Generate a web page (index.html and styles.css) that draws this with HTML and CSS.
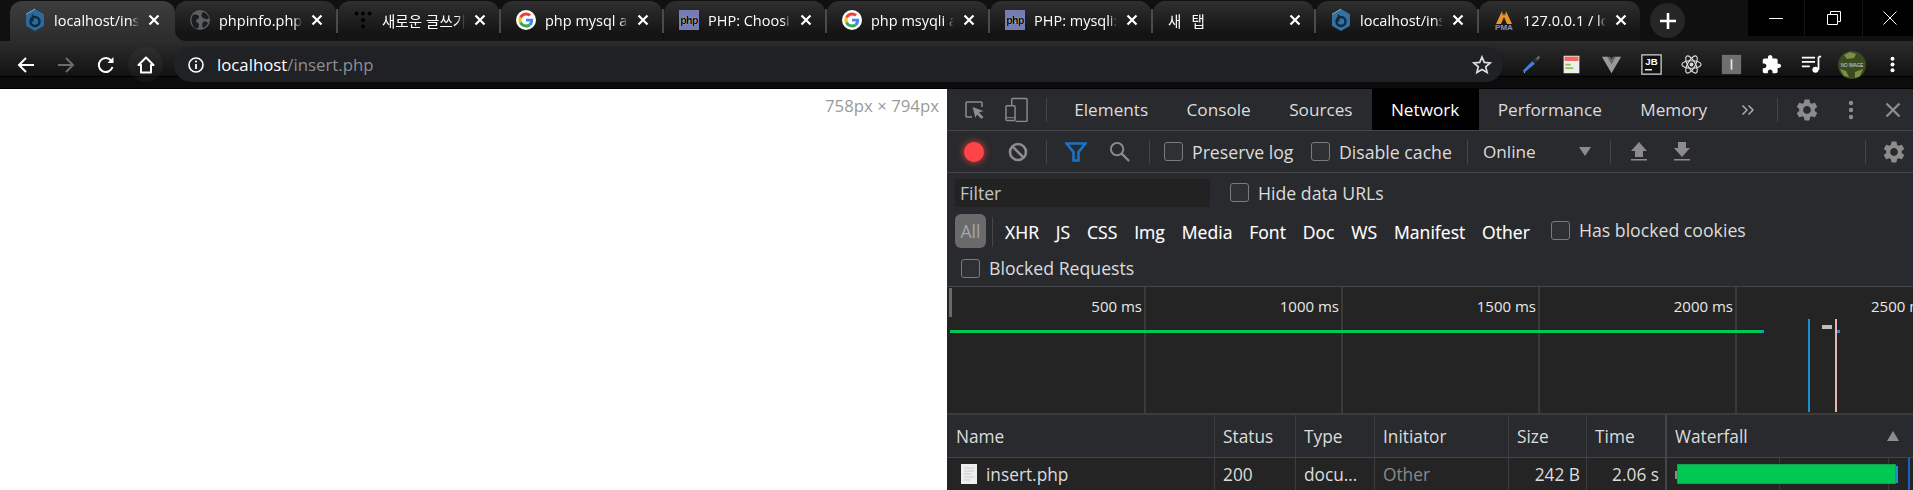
FILE: index.html
```html
<!DOCTYPE html>
<html lang="ko">
<head>
<meta charset="utf-8">
<title>localhost/insert.php</title>
<link rel="stylesheet" href="styles.css">
</head>
<body>
<svg class="defs" aria-hidden="true">
  <symbol id="g" viewBox="-8 -8 64 64">
    <circle cx="24" cy="24" r="32" fill="#fff"/>
    <path fill="#EA4335" d="M24 9.5c3.54 0 6.71 1.22 9.21 3.6l6.85-6.85C35.9 2.38 30.47 0 24 0 14.62 0 6.51 5.38 2.56 13.22l7.98 6.19C12.43 13.72 17.74 9.5 24 9.5z"/>
    <path fill="#4285F4" d="M46.98 24.55c0-1.57-.15-3.09-.38-4.55H24v9.02h12.94c-.58 2.96-2.26 5.48-4.78 7.18l7.73 6c4.51-4.18 7.09-10.36 7.09-17.65z"/>
    <path fill="#FBBC05" d="M10.53 28.59c-.48-1.45-.76-2.99-.76-4.59s.27-3.14.76-4.59l-7.98-6.19C.92 16.46 0 20.12 0 24c0 3.88.92 7.54 2.56 10.78l7.97-6.19z"/>
    <path fill="#34A853" d="M24 48c6.48 0 11.93-2.13 15.89-5.81l-7.73-6c-2.15 1.45-4.92 2.3-8.16 2.3-6.26 0-11.57-4.22-13.47-9.91l-7.98 6.19C6.51 42.62 14.62 48 24 48z"/>
  </symbol>
  <symbol id="x" viewBox="0 0 14 14">
    <path d="M2.5 2.5l9 9M11.5 2.5l-9 9" stroke="#fff" stroke-width="2.2" fill="none"/>
  </symbol>
  <symbol id="bn" viewBox="0 0 20 24">
    <path d="M10 1l9 5.2v11.6L10 23l-9-5.200V6.200z" fill="currentColor"/>
    <circle cx="10" cy="13.500" r="4.500" fill="none" stroke="#0d2a40" stroke-width="2.400"/>
    <path d="M7.500 6.500v7" stroke="#0d2a40" stroke-width="1.800"/>
    <path d="M1 6.200L10 1" stroke="#7fb0d0" stroke-width="1"/>
  </symbol>
  <symbol id="gear" viewBox="0 0 24 24">
    <path fill="currentColor" d="M19.140 12.940c.04-.3.06-.61.06-.94 0-.32-.02-.64-.07-.94l2.030-1.580c.18-.14.23-.41.12-.61l-1.920-3.320c-.12-.22-.37-.29-.59-.22l-2.390.96c-.5-.38-1.030-.7-1.620-.94l-.36-2.540c-.04-.24-.24-.41-.48-.41h-3.840c-.24 0-.43.17-.47.41l-.36 2.540c-.59.24-1.130.57-1.620.94l-2.390-.96c-.22-.08-.47 0-.59.22L2.740 8.870c-.12.21-.08.47.12.61l2.030 1.580c-.05.3-.09.63-.09.94s.02.64.07.94l-2.030 1.580c-.18.14-.23.41-.12.61l1.920 3.320c.12.22.37.29.59.22l2.390-.96c.5.38 1.030.7 1.620.94l.36 2.540c.05.24.24.41.48.41h3.840c.24 0 .44-.17.47-.41l.36-2.540c.59-.24 1.130-.56 1.620-.94l2.390.96c.22.08.47 0 .59-.22l1.920-3.320c.12-.22.07-.47-.12-.61l-2.010-1.580zM12 15.600c-1.980 0-3.600-1.620-3.600-3.600s1.620-3.600 3.600-3.600 3.600 1.620 3.600 3.600-1.620 3.600-3.600 3.600z"/>
  </symbol>
</svg>

<header class="chrome">
  <div class="tabstrip">
    <div class="tab active">
      <svg class="fav fav-bn-dim"><use href="#bn"/></svg>
      <span class="title">localhost/insert.php</span>
      <svg class="close"><use href="#x"/></svg>
    </div>
    <div class="tab">
      <svg class="fav" viewBox="0 0 20 20"><circle cx="10" cy="10" r="10" fill="#5b5e63"/><path d="M3 5c4-1 6 0 6 2s-3 2-3 4 3 1 3 4-2 4-4 3C2 16 0 9 3 5zM13 2c3 1 5 3 6 6-2 2-4 1-6 0s-2-4 0-6zM13 12c2-1 4 0 5 1-1 2-3 4-5 5-1-2-1-4 0-6z" fill="#1b1c1e"/></svg>
      <span class="title">phpinfo.php</span>
      <svg class="close"><use href="#x"/></svg>
    </div>
    <i class="tabsep"></i>
    <div class="tab">
      <svg class="fav" viewBox="0 0 20 20"><g fill="#000"><circle cx="3.500" cy="3.500" r="2"/><circle cx="10" cy="3.500" r="2"/><circle cx="16.500" cy="3.500" r="2"/><circle cx="10" cy="10" r="2"/><circle cx="10" cy="16.500" r="2"/></g></svg>
      <span class="title ko">새로운 글쓰기</span>
      <svg class="close"><use href="#x"/></svg>
    </div>
    <i class="tabsep"></i>
    <div class="tab">
      <svg class="fav"><use href="#g"/></svg>
      <span class="title">php mysql and</span>
      <svg class="close"><use href="#x"/></svg>
    </div>
    <i class="tabsep"></i>
    <div class="tab">
      <span class="fav php">php</span>
      <span class="title">PHP: Choosing</span>
      <svg class="close"><use href="#x"/></svg>
    </div>
    <i class="tabsep"></i>
    <div class="tab">
      <svg class="fav"><use href="#g"/></svg>
      <span class="title">php msyqli an</span>
      <svg class="close"><use href="#x"/></svg>
    </div>
    <i class="tabsep"></i>
    <div class="tab">
      <span class="fav php">php</span>
      <span class="title">PHP: mysqli::</span>
      <svg class="close"><use href="#x"/></svg>
    </div>
    <i class="tabsep"></i>
    <div class="tab">
      <span class="title ko wide">새 탭</span>
      <svg class="close"><use href="#x"/></svg>
    </div>
    <i class="tabsep"></i>
    <div class="tab">
      <svg class="fav fav-bn"><use href="#bn"/></svg>
      <span class="title">localhost/insert.php</span>
      <svg class="close"><use href="#x"/></svg>
    </div>
    <i class="tabsep"></i>
    <div class="tab">
      <svg class="fav" viewBox="0 0 20 20"><path d="M2 14L8 1l1 5 1-3 1 3 1-5 6 13h-5l-3-7-3 7z" fill="#e8952a"/><text x="10" y="20" class="pma">PMA</text></svg>
      <span class="title">127.0.0.1 / localhost</span>
      <svg class="close"><use href="#x"/></svg>
    </div>
    <div class="newtab"><svg viewBox="0 0 18 18"><path d="M9 1v16M1 9h16" stroke="#fff" stroke-width="2.600"/></svg></div>
    <div class="winctl">
      <div class="winbtn"><svg viewBox="0 0 14 14"><path d="M0 7.500h14" stroke="#fff"/></svg></div>
      <div class="winbtn"><svg viewBox="0 0 14 14"><path d="M.5 3.500h10v10H.5zM3.500 3.500V.5h10v10h-3" stroke="#fff" fill="none"/></svg></div>
      <div class="winbtn"><svg viewBox="0 0 14 14"><path d="M.5.5l13 13M13.500.5l-13 13" stroke="#fff"/></svg></div>
    </div>
  </div>
  <div class="toolbar">
    <button class="nav"><svg viewBox="0 0 18 18"><path d="M17 9H2M9 2L2 9l7 7" stroke="#fff" stroke-width="2" fill="none"/></svg></button>
    <button class="nav"><svg viewBox="0 0 18 18"><path d="M1 9h15M9 2l7 7-7 7" stroke="#6c6c6c" stroke-width="2" fill="none"/></svg></button>
    <button class="nav"><svg viewBox="0 0 18 18"><path d="M15.500 11a7 7 0 1 1-1-6" stroke="#fff" stroke-width="2" fill="none"/><path d="M16.500 1v6h-6z" fill="#fff"/></svg></button>
    <button class="nav home"><svg viewBox="0 0 18 18"><path d="M9 1.500L1.500 9H4v7.500h10V9h2.500z" stroke="#fff" stroke-width="2" fill="none" stroke-linejoin="round"/></svg></button>
    <div class="omnibox">
      <svg class="info" viewBox="0 0 16 16"><circle cx="8" cy="8" r="7" stroke="#fff" stroke-width="1.600" fill="none"/><path d="M8 7v5" stroke="#fff" stroke-width="1.800"/><circle cx="8" cy="4.500" r="1.100" fill="#fff"/></svg>
      <span class="url"><span class="host">localhost</span>/insert.php</span>
      <svg class="star" viewBox="0 0 20 20"><path d="M10 2l2.300 5.400 5.900.5-4.500 3.900 1.400 5.700L10 14.600l-5.100 2.900 1.400-5.700L1.800 7.900l5.900-.5z" stroke="#ddd" stroke-width="1.700" fill="none"/></svg>
    </div>
    <div class="ext-row">
      <svg class="ext" viewBox="0 0 24 24"><path d="M4 21l-2-2L13 8l3 3z" fill="#3f7de0"/><path d="M14 7l3-3 3 3-3 3z" fill="#333"/><path d="M17 5l3-3 2 2-3 3z" fill="#666"/><path d="M3 22l1-2 1 1z" fill="#9bc"/></svg>
      <svg class="ext" viewBox="0 0 24 24"><rect x="3" y="2" width="18" height="20" fill="#eee"/><rect x="4" y="3" width="16" height="5" fill="#f06a62"/><path d="M5 11h6v2H5zM5 15h9v2H5z" fill="#8bc34a"/></svg>
      <svg class="ext" viewBox="0 0 24 24"><path d="M1 3h7l4 7 4-7h7L12 22z" fill="#9a9a9a"/><path d="M7 3h3.500L12 6l1.500-3H17l-5 9z" fill="#686868"/></svg>
      <svg class="ext" viewBox="0 0 24 24"><rect x="1" y="1" width="22" height="22" fill="#111" stroke="#ccc" stroke-width="1.500"/><text x="12" y="13" class="jb">JB</text><path d="M4.500 18h8" stroke="#fff" stroke-width="1.600"/></svg>
      <svg class="ext" viewBox="0 0 24 24"><g fill="none" stroke="#ddd" stroke-width="1.300"><ellipse cx="12" cy="12" rx="11" ry="4.300"/><ellipse cx="12" cy="12" rx="11" ry="4.300" transform="rotate(60 12 12)"/><ellipse cx="12" cy="12" rx="11" ry="4.300" transform="rotate(120 12 12)"/></g><circle cx="12" cy="12" r="2.200" fill="#ddd"/></svg>
      <svg class="ext" viewBox="0 0 24 24"><rect x="1" y="1" width="22" height="22" fill="#6f6f6f"/><rect x="11" y="6" width="2" height="12" fill="#dfe4ee"/></svg>
      <svg class="ext" viewBox="0 0 24 24"><path fill="#fff" d="M20.500 11H19V7c0-1.100-.9-2-2-2h-4V3.500C13 2.120 11.880 1 10.500 1S8 2.120 8 3.500V5H4c-1.100 0-1.990.9-1.990 2v3.800H3.500c1.490 0 2.700 1.210 2.700 2.700s-1.210 2.700-2.700 2.700H2V20c0 1.100.9 2 2 2h3.800v-1.500c0-1.490 1.210-2.700 2.700-2.700 1.490 0 2.700 1.210 2.700 2.700V22H17c1.100 0 2-.9 2-2v-4h1.500c1.380 0 2.500-1.120 2.500-2.500S21.880 11 20.500 11z"/></svg>
      <svg class="ext" viewBox="0 0 24 24"><path d="M1 4h15M1 9h15M1 14h9" stroke="#fff" stroke-width="2"/><path d="M20 3h3M20 3v15" stroke="#fff" stroke-width="2"/><circle cx="16.500" cy="18" r="3.500" fill="#fff"/></svg>
      <svg class="avatar" viewBox="0 0 28 28"><circle cx="14" cy="14" r="14" fill="#3c4a20"/><path d="M6 4l6-3 6 2-2 4-7 1zM2 18l6 2 3 6-5-1zM17 21l8-3-3 7-5 2z" fill="#7c8f45"/><text x="14" y="16" class="noimg">NO IMAGE</text></svg>
      <svg class="dots" viewBox="0 0 6 20"><g fill="#fff"><circle cx="3" cy="3" r="2.400"/><circle cx="3" cy="10" r="2.400"/><circle cx="3" cy="17" r="2.400"/></g></svg>
    </div>
  </div>
</header>

<main class="main">
  <section class="page"><span class="dim">758px × 794px</span></section>
  <section class="devtools">
    <div class="dt-row tabs-row">
      <svg class="ic ic-inspect" viewBox="0 0 20 20"><path d="M7 17H2a1 1 0 0 1-1-1V3a1 1 0 0 1 1-1h14a1 1 0 0 1 1 1v4" stroke="#8c8c8c" stroke-width="1.500" fill="none"/><path d="M7.500 7l11 4-4.500 1.500 4.500 4.500-2 2-4.500-4.500L10.500 18z" fill="#8c8c8c"/></svg>
      <svg class="ic ic-device" viewBox="0 0 24 25"><path d="M7 8V2a1 1 0 0 1 1-1h14a1 1 0 0 1 1 1v22a1 1 0 0 1-1 1H11" stroke="#8c8c8c" stroke-width="1.500" fill="none"/><rect x="1" y="8.500" width="9.500" height="15.500" rx="1" stroke="#8c8c8c" stroke-width="1.500" fill="none"/><path d="M1 21h9.500" stroke="#8c8c8c"/></svg>
      <i class="vsep vsep-tabs"></i>
      <span class="dt-tab first">Elements</span>
      <span class="dt-tab">Console</span>
      <span class="dt-tab">Sources</span>
      <span class="dt-tab current">Network</span>
      <span class="dt-tab">Performance</span>
      <span class="dt-tab">Memory</span>
      <svg class="ic ic-more" viewBox="0 0 14 12"><path d="M1.500 1.500L6 6l-4.500 4.500M7.500 1.500L12 6l-4.500 4.500" stroke="#aaa" stroke-width="1.500" fill="none"/></svg>
      <i class="vsep vsep-more"></i>
      <svg class="ic ic-gear ic-gear-top"><use href="#gear"/></svg>
      <svg class="ic ic-kebab" viewBox="0 0 6 20"><g fill="#8c8c8c"><circle cx="3" cy="3" r="2.200"/><circle cx="3" cy="10" r="2.200"/><circle cx="3" cy="17" r="2.200"/></g></svg>
      <svg class="ic ic-close" viewBox="0 0 16 16"><path d="M1.500 1.500l13 13M14.500 1.500l-13 13" stroke="#8c8c8c" stroke-width="2.400"/></svg>
    </div>
    <div class="dt-row tools-row">
      <span class="record"></span>
      <svg class="ic ic-block" viewBox="0 0 20 20"><circle cx="10" cy="10" r="8" stroke="#8c8c8c" stroke-width="2.600" fill="none"/><path d="M4.500 4.500l11 11" stroke="#8c8c8c" stroke-width="2.600"/></svg>
      <i class="vsep vsep-a"></i>
      <svg class="ic ic-filter" viewBox="0 0 22 20"><path d="M1.500 1.500h19L13.500 10v8.500h-5V10z" fill="none" stroke="#1a73c4" stroke-width="2.600"/></svg>
      <svg class="ic ic-search" viewBox="0 0 22 22"><circle cx="8.500" cy="8.500" r="6.500" stroke="#8c8c8c" stroke-width="2" fill="none"/><path d="M13 13l8 8" stroke="#8c8c8c" stroke-width="2.400"/></svg>
      <i class="vsep vsep-b"></i>
      <label class="check preserve"><i class="box"></i>Preserve log</label>
      <label class="check disable"><i class="box"></i>Disable cache</label>
      <i class="vsep vsep-c"></i>
      <span class="online">Online</span>
      <i class="tri"></i>
      <i class="vsep vsep-d"></i>
      <svg class="ic ic-up" viewBox="0 0 16 19"><path d="M8 0l8 9h-4v6H4V9H0zM0 17h16v1.500H0z" fill="#8c8c8c"/></svg>
      <svg class="ic ic-down" viewBox="0 0 16 19"><path d="M4 0h8v6h4l-8 9-8-9h4zM0 17h16v1.500H0z" fill="#8c8c8c"/></svg>
      <i class="vsep vsep-e"></i>
      <svg class="ic ic-gear ic-gear-tool"><use href="#gear"/></svg>
    </div>
    <div class="dt-plain filter-row">
      <span class="filter-input">Filter</span>
      <label class="check hide"><i class="box"></i>Hide data URLs</label>
    </div>
    <div class="dt-plain types-row">
      <span class="chip">All</span>
      <i class="vsep vsep-chip"></i>
      <span class="type">XHR</span>
      <span class="type">JS</span>
      <span class="type">CSS</span>
      <span class="type">Img</span>
      <span class="type">Media</span>
      <span class="type">Font</span>
      <span class="type">Doc</span>
      <span class="type">WS</span>
      <span class="type">Manifest</span>
      <span class="type">Other</span>
      <label class="check cookies"><i class="box"></i>Has blocked cookies</label>
    </div>
    <div class="dt-plain blocked-row">
      <label class="check"><i class="box"></i>Blocked Requests</label>
    </div>
    <div class="overview">
      <span class="tick">500 ms</span>
      <span class="tick">1000 ms</span>
      <span class="tick">1500 ms</span>
      <span class="tick">2000 ms</span>
      <span class="tick last">2500 ms</span>
      <i class="handle"></i>
      <i class="ov ov-green"></i>
      <i class="ov ov-vblue"></i>
      <i class="ov ov-vpink"></i>
      <i class="ov ov-dash"></i>
      <i class="ov ov-tail"></i>
    </div>
    <div class="net-row net-head">
      <span class="cell c-name">Name</span>
      <span class="cell c-status">Status</span>
      <span class="cell c-type">Type</span>
      <span class="cell c-init">Initiator</span>
      <span class="cell c-size">Size</span>
      <span class="cell c-time">Time</span>
      <span class="cell c-wf">Waterfall<i class="sort"></i></span>
    </div>
    <div class="net-row net-body">
      <span class="cell c-name"><svg class="doc" viewBox="0 0 16 20"><path d="M0 0h16v20H0z" fill="#eee"/><path d="M3 4h10M3 7h10M3 10h7M3 13h10M3 16h6" stroke="#ccc"/></svg>insert.php</span>
      <span class="cell c-status">200</span>
      <span class="cell c-type">docu…</span>
      <span class="cell c-init muted">Other</span>
      <span class="cell c-size">242 B</span>
      <span class="cell c-time">2.06 s</span>
      <span class="cell c-wf wf">
        <i class="wf-line wf-l1"></i><i class="wf-line wf-l2"></i>
        <i class="wf-wait"></i><i class="wf-bar"></i><i class="wf-end"></i><i class="wf-mark"></i>
      </span>
    </div>
  </section>
</main>
</body>
</html>
```

FILE: styles.css
```css
* { box-sizing: border-box; }
html, body { margin: 0; height: 490px; overflow: hidden; background: #000; }
body { font-family: "Open Sans", "Noto Sans CJK KR", sans-serif; color: #fff; display: flex; flex-direction: column; }
.defs { position: absolute; width: 0; height: 0; }
i { display: block; font-style: normal; }

/* tabs */
.tabstrip { height: 41px; display: flex; background: #101010; padding-left: 10px; align-items: flex-end; }
.tab { width: 161px; height: 40px; flex: none; display: flex; align-items: center; padding: 0 12px 2px 15px; border-radius: 12px 12px 0 0; background: linear-gradient(#2f2f2f, #141414 80%); position: relative; font-size: 14.500px; }
.tab.active { width: 165px; padding-right: 14px; background: linear-gradient(#3d3d3d, #2c2c2c); }
.tab.active::after { content: ""; position: absolute; right: -10px; bottom: 0; width: 10px; height: 10px; background: radial-gradient(circle at 100% 0, transparent 9.500px, #2c2c2c 10px); z-index: 2; }
.tabsep { width: 2px; height: 24px; flex: none; align-self: flex-start; margin-top: 9px; background: #4b4b4b; }
.fav { width: 20px; height: 20px; flex: none; margin-right: 9px; }
.fav-bn-dim { height: 24px; color: #2c6a99; }
.fav-bn { height: 24px; color: #37719f; }
.php { background: #777bb3; color: #000; font: 700 10.500px/20px "Liberation Sans", sans-serif; text-align: center; letter-spacing: -.5px; text-shadow: 0 0 1px #fff; }
.pma { font: 700 8px "Liberation Sans", sans-serif; fill: #8a90c0; text-anchor: middle; }
.title { flex: 1; min-width: 0; white-space: nowrap; overflow: hidden; -webkit-mask-image: linear-gradient(90deg, #000 90%, transparent 100%); mask-image: linear-gradient(90deg, #000 90%, transparent 100%); }
.ko { font-family: "Noto Sans CJK KR", sans-serif; }
.ko.wide { letter-spacing: 3px; }
.close { width: 14px; height: 14px; flex: none; margin-left: 8px; }
.newtab { width: 35px; height: 35px; flex: none; margin: 0 0 3px 10px; border-radius: 50%; background: #262626; display: flex; align-items: center; justify-content: center; }
.newtab svg { width: 18px; height: 18px; }
.winctl { margin-left: auto; align-self: flex-start; display: flex; height: 36px; background: #000; }
.winbtn { width: 56px; height: 36px; display: flex; align-items: center; justify-content: center; border-left: 1px solid #151515; }
.winbtn:nth-child(1) { border-left: 0; }
.winbtn:nth-child(2) { width: 58px; }
.winbtn:nth-child(3) { width: 51px; padding-left: 4px; }
.winbtn svg { width: 14px; height: 14px; }

/* toolbar */
.toolbar { height: 48px; display: flex; align-items: flex-start; padding: 6px 0 0 8px; background: linear-gradient(#2c2c2c, #121212 35px, #000 35px, #000 36px, #0c0c0c 36px, #0c0c0c 47px, #000 47px); }
.nav { width: 35px; height: 35px; margin-right: 5px; padding: 0; border: 0; background: none; display: flex; align-items: center; justify-content: center; flex: none; border-radius: 50%; }
.nav svg { width: 18px; height: 18px; }
.nav.home { background: rgba(255, 255, 255, .035); }
.omnibox { width: 1329px; margin-left: 6px; height: 35px; border-radius: 18px; background: #202124; display: flex; align-items: center; padding: 0 11px 0 14px; flex: none; }
.info { width: 16px; height: 16px; flex: none; }
.url { margin-left: 13px; font-size: 16.800px; color: #8e8f92; }
.host { color: #fff; }
.star { width: 20px; height: 20px; margin-left: auto; }
.ext-row { display: flex; align-items: center; height: 35px; margin-left: 18px; gap: 19px; }
.ext { width: 21px; height: 21px; flex: none; }
.avatar { width: 28px; height: 28px; margin: 0 -3.500px; flex: none; }
.dots { width: 5px; height: 17px; margin-left: 9px; flex: none; }
.jb { font: 700 11px "Liberation Sans", sans-serif; fill: #fff; text-anchor: middle; }
.noimg { font: 4.500px "Liberation Sans", sans-serif; fill: #ddd; text-anchor: middle; }

/* page */
.main { flex: 1; min-height: 0; display: flex; }
.page { width: 947px; flex: none; background: #fff; display: flex; justify-content: flex-end; padding: 5px 8px 0 0; }
.dim { font-size: 16.800px; line-height: 24px; height: 24px; color: #9a9a9a; }

/* devtools */
.devtools { flex: 1; min-width: 0; background: #292a2d; font-size: 17.200px; overflow: hidden; color: #dcdcdc; }
.dt-row { display: flex; align-items: center; border-bottom: 1px solid #45464a; }
.tabs-row { height: 42px; padding: 0 12px 0 18px; }
.tools-row { height: 42px; padding: 0 6px 0 18px; }
.ic { flex: none; display: block; }
.ic-inspect { width: 20px; height: 20px; }
.ic-device { width: 23px; height: 25px; margin-left: 20px; }
.vsep { width: 1px; height: 24px; background: #45464a; flex: none; }
.vsep-tabs { margin-left: 18px; }
.dt-tab { padding: 0 19.200px; height: 41px; line-height: 41px; flex: none; }
.dt-tab.first { margin-left: 8px; }
.dt-tab.current { background: #000; color: #fff; }
.ic-more { width: 14px; height: 12px; margin-left: auto; }
.vsep-more { margin-left: 22px; }
.ic-gear { width: 26px; height: 26px; color: #8c8c8c; }
.ic-gear-top { margin-left: 16px; }
.ic-kebab { width: 6px; height: 20px; margin-left: 28px; }
.ic-close { width: 16px; height: 16px; margin-left: 31px; }
.record { width: 20px; height: 20px; border-radius: 50%; background: #ff4447; box-shadow: 0 0 6px 1px #b83a3a; flex: none; margin-left: -1px; }
.ic-block { width: 20px; height: 20px; margin-left: 24px; }
.vsep-a { margin-left: 18px; }
.ic-filter { width: 22px; height: 20px; margin-left: 18px; }
.ic-search { width: 21px; height: 21px; margin-left: 22px; }
.vsep-b { margin-left: 19px; }
.check { display: flex; align-items: center; flex: none; font-size: 17.700px; }
.box { width: 19px; height: 19px; border: 1px solid #7b7b7b; border-radius: 3px; background: #2f3033; margin-right: 9px; flex: none; }
.preserve { margin-left: 14px; }
.disable { margin-left: 17.500px; }
.vsep-c { margin-left: 15px; }
.online { margin-left: 15px; width: 96px; flex: none; }
.tri { width: 0; height: 0; border: 6px solid transparent; border-top: 9px solid #8c8c8c; border-bottom: 0; flex: none; }
.vsep-d { margin-left: 19px; }
.ic-up { width: 16px; height: 19px; margin-left: 20px; }
.ic-down { width: 16px; height: 19px; margin-left: 27px; }
.vsep-e { margin-left: auto; }
.ic-gear-tool { margin-left: 15px; }

.dt-plain { display: flex; align-items: center; }
.filter-row { height: 39px; padding: 0 0 0 8px; }
.filter-input { width: 255px; height: 28px; line-height: 28px; background: #222; padding-left: 5px; color: #c4c4c4; flex: none; font-size: 17.600px; }
.hide { margin-left: 20px; }
.types-row { height: 40px; padding-left: 8px; font-size: 17.600px; }
.chip { width: 31px; height: 34px; line-height: 34px; border-radius: 6px; background: #6a6a6a; color: #a5a5a5; text-align: center; flex: none; margin-bottom: 2px; }
.vsep-chip { margin-left: 6px; height: 30px; }
.type { margin-left: 16.800px; flex: none; color: #fff; text-shadow: 0 0 1px rgba(255, 255, 255, .35); }
.vsep-chip + .type { margin-left: 12px; }
.cookies { margin-left: 21px; margin-bottom: 4px; }
.blocked-row { height: 34px; padding: 0 0 2px 14px; }

.overview { height: 129px; display: flex; background: #242424; border-top: 1px solid #45464a; border-bottom: 2px solid #3c3c3c; position: relative; padding-left: 2px; font-size: 15px; }
.tick { width: 197px; flex: none; text-align: right; padding: 7px 2px 0 0; border-right: 2px solid #3a3a3a; line-height: 24px; white-space: nowrap; color: #e8e8e8; }
.tick.last { width: 178px; text-align: left; padding-left: 134px; padding-right: 0; border-right: 0; }
.handle { position: absolute; left: 2px; top: 1px; width: 3px; height: 29px; background: #6a6a6a; }
.ov { position: absolute; }
.ov-green { left: 3px; top: 43px; width: 814px; height: 3px; background: #00c853; border-right: 2px solid #1a8fe0; }
.ov-vblue { left: 861px; top: 32px; width: 2px; height: 93px; background: #1a8fd0; }
.ov-vpink { left: 888px; top: 32px; width: 2px; height: 93px; background: #e6b5b0; }
.ov-dash { left: 875px; top: 38px; width: 10px; height: 4px; background: #bdbdbd; }
.ov-tail { left: 890px; top: 43px; width: 3px; height: 3px; background: #1a8fe0; }

.net-row { display: flex; font-size: 17.300px; }
.net-head { height: 43px; background: #292a2d; border-bottom: 1px solid #45464a; }
.net-body { height: 32px; background: #242424; }
.cell { display: flex; align-items: center; padding: 0 6px 0 8px; border-right: 1px solid #3c3d40; flex: none; white-space: nowrap; overflow: hidden; }
.c-name { width: 268px; padding-left: 9px; }
.net-body .c-name { padding-left: 14px; }
.c-status { width: 81px; }
.c-type { width: 79px; }
.c-init { width: 134px; }
.c-size { width: 78px; }
.c-time { width: 80px; border-right: 2px solid #45464a; }
.c-wf { flex: 1; border-right: 0; min-width: 0; position: relative; }
.net-body .c-size, .net-body .c-time { justify-content: flex-end; }
.muted { color: #8a8a8a; }
.doc { width: 16px; height: 20px; margin-right: 9px; flex: none; }
.sort { margin-left: auto; margin-right: 8px; width: 0; height: 0; border: 6.500px solid transparent; border-bottom: 10px solid #8c8c8c; border-top: 0; }
.wf { padding: 0; overflow: hidden; }
.wf-line { position: absolute; top: 0; bottom: 0; width: 1px; background: #3a3a3a; }
.wf-l1 { left: 112px; }
.wf-l2 { left: 221px; }
.wf-wait { position: absolute; left: 8px; top: 13px; width: 3px; height: 8px; background: #8a8a8a; }
.wf-bar { position: absolute; left: 10px; top: 6px; width: 219px; height: 20px; background: #00c853; border: 1px solid #12a04d; }
.wf-end { position: absolute; left: 229px; top: 8px; width: 2px; height: 17px; background: #1a8fe0; }
.wf-mark { position: absolute; left: 241px; top: 0; bottom: 0; width: 2px; background: #1a5fc8; }
```
